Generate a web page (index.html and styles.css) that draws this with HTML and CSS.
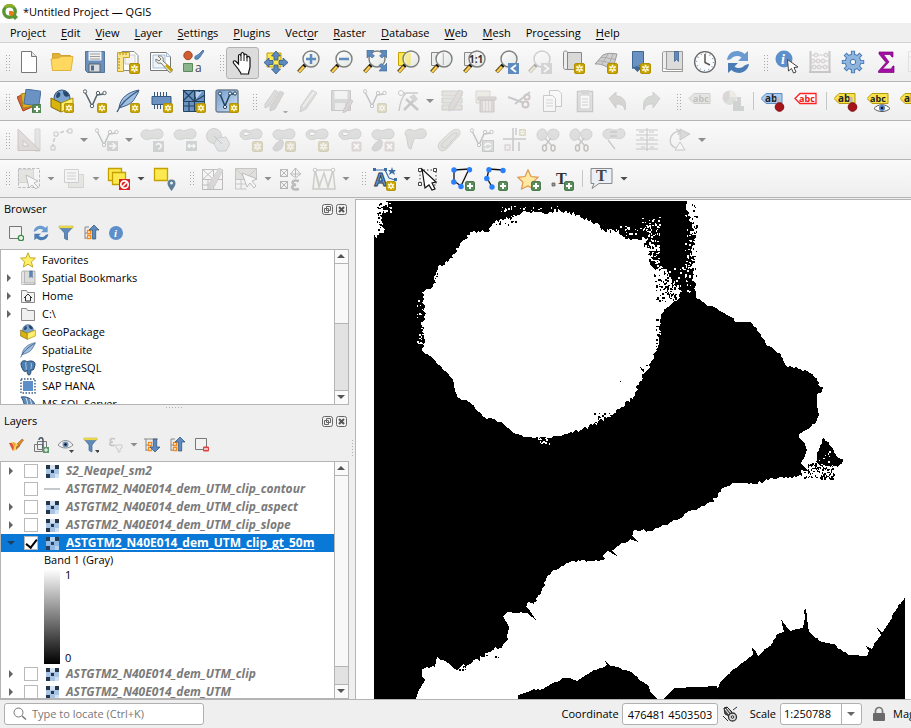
FILE: index.html
```html
<!DOCTYPE html>
<html lang="en">
<head>
<meta charset="utf-8">
<title>*Untitled Project — QGIS</title>
<link rel="stylesheet" href="styles.css">
</head>
<body>
<svg class="paints" aria-hidden="true">
  <defs>
    <linearGradient id="g-blue" x1="0" y1="0" x2="1" y2="1"><stop offset="0" stop-color="#6e9bd0"/><stop offset="1" stop-color="#d5e4f3"/></linearGradient>
    <linearGradient id="g-lens" x1="0" y1="0" x2="1" y2="1"><stop offset="0" stop-color="#fff"/><stop offset="1" stop-color="#dfe4e0"/></linearGradient>
  </defs>
</svg>
<svg class="sprite" aria-hidden="true">
  <symbol id="b-new" viewBox="0 0 11 11"><rect x=".5" y=".5" width="10" height="10" rx="1.5" fill="#c9a400" stroke="#b08f00"/><path d="M5.5 1.8v7.4M2.3 3.6l6.4 3.8M8.700 3.600l-6.400 3.800" stroke="#fffbe0" stroke-width="1.700"/><circle cx="5.500" cy="5.500" r="1" fill="#c9a400"/></symbol>
  <symbol id="b-add" viewBox="0 0 11 11"><rect x=".5" y=".5" width="9" height="9" rx="1.500" fill="#5a8c5a" stroke="#4d7a4d"/><path d="M5 2v6M2 5h6" stroke="#fff" stroke-width="2"/></symbol>
  <symbol id="b-x" viewBox="0 0 11 11"><rect x=".5" y=".5" width="10" height="10" rx="1.500" fill="#c99"/><path d="M3 3l5 5M8 3l-5 5" stroke="#fff" stroke-width="2"/></symbol>
  <symbol id="lens" viewBox="0 0 24 24"><path d="M8 15l-6.500 7" stroke="#5e4a1c" stroke-width="4"/><path d="M7 16.500l-5 5.500" stroke="#ffd04d" stroke-width="2.200"/><path d="M9 14l-2 2.500" stroke="#111" stroke-width="3.500"/><circle cx="14" cy="9" r="8" fill="url(#g-lens)" fill-opacity=".85" stroke="#7d807c" stroke-width="1.400"/></symbol>
  <symbol id="blob" viewBox="0 0 24 24"><path d="M2 9c-3-4 1-8 6-7 4 2 6-1 10-1 5 0 6 5 4 8-3 4-9 0-12 2-3 1-6 1-8-2z" fill="#aab5ab" stroke="#828a82"/></symbol>
  <symbol id="node" viewBox="0 0 24 24"><path d="M2 3l7 14 5-11 7-1" fill="none" stroke="#56646e" stroke-width="1.500"/><g fill="#fff" stroke="#56646e"><circle cx="2" cy="2.500" r="1.700"/><circle cx="9" cy="17" r="1.700"/><circle cx="15" cy="4" r="1.700"/><circle cx="21.500" cy="4" r="1.700"/></g></symbol>

  <symbol id="logo" viewBox="0 0 16 16"><circle cx="7.500" cy="7.500" r="5.700" fill="#fff" stroke="#589632" stroke-width="3.400"/><path d="M3 3a6.400 6.400 0 0 1 9 0" fill="none" stroke="#93b023" stroke-width="2.500"/><path d="M7 7h3l6 6-3 3-6-6z" fill="#589632"/><path d="M7 7h3l2.500 2.500-3 3L7 10z" fill="#ee7913"/></symbol>
  <symbol id="new" viewBox="0 0 24 24"><path d="M4.500 1.500h10l5 5v16h-15z" fill="#fff" stroke="#777"/><path d="M14.500 1.500v5h5" fill="#e5e5e5" stroke="#777"/></symbol>
  <symbol id="open" viewBox="0 0 24 24"><path d="M2.500 20.500v-17h7l1.500 2h9.500v5" fill="#dfb13a" stroke="#d0a030"/><path d="M1 9l8-1 2-1.500h12l-2 14H2.500z" fill="#ffd95f" stroke="#e0b23c"/></symbol>
  <symbol id="save" viewBox="0 0 24 24"><path d="M2.500 1.500h19v21h-17l-2-2z" fill="#6a8fbd" stroke="#56759c"/><path d="M5.500 1.500h13v9h-13z" fill="#f2f2f2"/><path d="M7 4h10M7 6.500h10M7 9h10" stroke="#9a9a9a"/><path d="M6 14h11v8H6z" fill="#d9dde2" stroke="#566"/><path d="M8 15.500h3v5H8z" fill="#50688a"/></symbol>
  <symbol id="layout" viewBox="0 0 24 24"><path d="M6 1.500h12l4 4v15H6z" fill="#fff" stroke="#888"/><path d="M9 5h10v9H9z" fill="#f4f4f4" stroke="#ccc"/><path d="M1.500 2.500h12v5h-6v14h-6z" fill="#fae58a" stroke="#c8a21a"/><path d="M4 3v2M7 3v2M10 3v2M2 9h2M2 12h2M2 15h2M2 18h2" stroke="#a88610"/><use href="#b-new" x="13" y="13" width="11" height="11"/></symbol>
  <symbol id="layoutmgr" viewBox="0 0 24 24"><path d="M1.500 2.500h16l4 4v14h-20z" fill="#fff" stroke="#777"/><path d="M17.500 2.500v4h4M4 5h12v13H4z" fill="#eef3fa" stroke="#a9bcd6"/><path d="M9 6c4-1 6 2 5 5l9 8c1 2-1 4-3 3l-8-9c-3 1-6-1-5-4l3 2 2-2z" fill="#f1f1ee" stroke="#77776e"/><path d="M17 15l6 6" stroke="#c9a400" stroke-width="2.500"/></symbol>
  <symbol id="style" viewBox="0 0 24 24"><circle cx="6" cy="5.500" r="4.200" fill="#cc5f33" stroke="#a8431b"/><path d="M13 9c-1-4 2-3 4-5l4-4 1 1-4 6c-1 2-3 3-5 2z" fill="#5d8bc0" stroke="#446b99" stroke-width=".8"/><path d="M1.500 13.500h9v8h-9z" fill="#8cb48c" stroke="#5a8c5a"/><text x="13" y="22" font-size="12" fill="#444" font-family="Open Sans">a</text></symbol>
  <symbol id="hand" viewBox="0 0 24 24"><path d="M8 19L2.500 12c-1-2 1-3 2.500-1.500L7.500 13V5c0-2 2-2 2.500 0V3c.5-2 2.500-2 3 0v1.500c.5-2 3-1.500 3 .5v1c1-1 3-.5 3 1.500v8c0 3-1.500 4-1.500 7.500H10c0-1.500-1-2-2-3.500z" fill="#fff" stroke="#111" stroke-width="1.200"/><path d="M10 5v5M13 4.500v5.500M16 5.500v5" stroke="#111"/></symbol>
  <symbol id="pan" viewBox="0 0 24 24"><path d="M3 3h14v14H3z" fill="#fce94f" stroke="#c4a000"/><path d="M12 1l4.500 5H14v4h-4V6H7.500zM12 24l-4.500-5H10v-4h4v4h2.500zM0 12.500L5 8v2.500h4v4H5V17zM24 12.500L19 8v2.500h-4v4h4V17z" fill="#5d8bc0" stroke="#35597f" stroke-width=".8"/></symbol>
  <symbol id="zin" viewBox="0 0 24 24"><use href="#lens"/><path d="M14 4v10M9 9h10" stroke="#5d8bc0" stroke-width="2.500"/></symbol>
  <symbol id="zout" viewBox="0 0 24 24"><use href="#lens"/><path d="M9 9h10" stroke="#5d8bc0" stroke-width="2.500"/></symbol>
  <symbol id="zfull" viewBox="0 0 24 24"><use href="#lens"/><path d="M4 0h7L8.500 3l3 3L9 8 6.500 5.500 4 8zM24 0h-7l2.500 3-3 3L19 8l2.500-2.500L24 8zM24 21h-8l2.500-3-2.500-2.500 2-2 3 2.500 3-3z" fill="#5d8bc0" stroke="#3f6793" stroke-width=".6"/></symbol>
  <symbol id="zsel" viewBox="0 0 24 24"><path d="M2.500 2.500h11v13h-11z" fill="#fce94f" stroke="#c4a000"/><use href="#lens" x="1"/><path d="M11 3h4v12h-3c-4-3-4-9-1-12z" fill="#f3e56a" opacity=".6"/></symbol>
  <symbol id="zlay" viewBox="0 0 24 24"><path d="M2.500 2.500h11v13h-11z" fill="#eee" stroke="#888"/><use href="#lens" x="1"/><path d="M14.500 3v12" stroke="#bbb"/></symbol>
  <symbol id="znat" viewBox="0 0 24 24"><path d="M2.500 2.500h11v13h-11z" fill="#eee" stroke="#888"/><use href="#lens" x="1"/><text x="7" y="13" font-size="10" font-weight="700" fill="#333" font-family="Open Sans">1:1</text></symbol>
  <symbol id="zlast" viewBox="0 0 24 24"><use href="#lens"/><path d="M13 13h11v11H13z" fill="#5d8bc0"/><path d="M21 15l-4.500 3.500L21 22" fill="none" stroke="#fff" stroke-width="1.800"/></symbol>
  <symbol id="znext" viewBox="0 0 24 24"><use href="#lens"/><path d="M13 13h11v11H13z" fill="#999"/><path d="M16 15l4.500 3.500L16 22" fill="none" stroke="#fff" stroke-width="1.800"/></symbol>
  <symbol id="mapview" viewBox="0 0 24 24"><path d="M5.500 2.500h15v17h-15z" fill="#d9dad8" stroke="#888"/><path d="M2.500 2.500c0-2 4-2 4 0v17h-2c-2 0-2-2-2-3z" fill="#eee" stroke="#888"/><use href="#b-new" x="13" y="13" width="11" height="11"/></symbol>
  <symbol id="scene" viewBox="0 0 24 24"><path d="M1 14L9 5c4-2 8-2 14-1l-4 14c-5 1-10-5-18-4z" fill="#d0d1cf" stroke="#999"/><path d="M4 11c6-1 11 3 16 2M7 8c5-2 9 2 14 1M8 14l6-10M14 17l5-13" fill="none" stroke="#aaa"/><use href="#b-new" x="13" y="13" width="11" height="11"/></symbol>
  <symbol id="bmnew" viewBox="0 0 24 24"><path d="M5.500 1.500h11v19l-4-5-7 3z" fill="#6a93c4" stroke="#3f6793"/><path d="M5.500 17l5 5 6-6" fill="#3f6793"/><use href="#b-new" x="13" y="13" width="11" height="11"/></symbol>
  <symbol id="bm" viewBox="0 0 24 24"><path d="M5.500 1.500h17v20h-17z" fill="#dcdcdb" stroke="#999"/><path d="M2.500 3c0-2 4-2 4 0v16h-4z" fill="#eee" stroke="#999"/><path d="M2.500 18.500v3h20v-2h-16" fill="#fff" stroke="#999"/><path d="M14.500 1.500h4v10l-2-2-2 2z" fill="#5d8bc0" stroke="#35597f" stroke-width=".7"/></symbol>
  <symbol id="clock" viewBox="0 0 24 24"><circle cx="12" cy="12" r="10.400" fill="#fbfbfb" stroke="#666" stroke-width="1.300"/><circle cx="12" cy="12" r="8.500" fill="none" stroke="#7d9ec5" stroke-width="1.500" stroke-dasharray="1 3.450"/><path d="M12 4v8.500l5 2.500" fill="none" stroke="#555" stroke-width="1.500"/></symbol>
  <symbol id="refresh" viewBox="0 0 24 24"><path d="M1 10C2 3 8 0 14 1.500c2 .5 3.500 1.500 4.500 2.500L22 1v10H12l3.500-3.500C12 5 8 6 6 8c-1 1-3 2-5 2z" fill="#6a9bd0"/><path d="M23 14c-1 7-7 10-13 8.500-2-.5-3.500-1.500-4.500-2.500L2 23V13h10l-3.500 3.500C12 19 16 18 18 16c1-1 3-2 5-2z" fill="#4a7db5"/></symbol>
  <symbol id="ident" viewBox="0 0 24 24"><circle cx="9" cy="9" r="8.500" fill="#5d8fca"/><text x="6" y="14" font-size="14" font-weight="700" font-style="italic" font-family="Liberation Serif" fill="#fff">i</text><path d="M12.500 9.500l1 11.500 3-2.500 2 4.500 2.500-1-2-4.500 4-.5z" fill="#fff" stroke="#444"/></symbol>
  <symbol id="abacus" viewBox="0 0 24 24"><path d="M2.500 1v21M21.500 1v21M1 22h22" fill="none" stroke="#777" stroke-width="2"/><path d="M3 5h18M3 11h18M3 17h18" stroke="#888"/><g fill="#e4dada" stroke="#a77"><circle cx="8" cy="5" r="2"/><circle cx="18" cy="5" r="2"/><circle cx="5" cy="11" r="2"/><circle cx="10" cy="11" r="2"/><circle cx="15" cy="11" r="2"/><circle cx="6" cy="17" r="2"/><circle cx="11" cy="17" r="2"/><circle cx="17" cy="17" r="2"/></g></symbol>
  <symbol id="gear" viewBox="0 0 24 24"><g stroke="#4478b3" stroke-width="4.200"><path id="t1" d="M12 .8v22.400M.8 12h22.400M4.100 4.100l15.800 15.800M19.900 4.100L4.100 19.900"/></g><circle cx="12" cy="12" r="7.800" fill="#8fb4de" stroke="#4478b3"/><g stroke="#8fb4de" stroke-width="2.400"><path d="M12 1.600v20.800M1.600 12h20.800M4.700 4.700l14.600 14.600M19.300 4.700L4.700 19.300"/></g><circle cx="12" cy="12" r="2.700" fill="#f3f3f3" stroke="#4478b3"/></symbol>
  <symbol id="sum" viewBox="0 0 24 24"><path d="M5 2h14v5h-1l-2-2.500h-6.500L15 12l-6.500 7H17l2-3h1v6.500H4.500V21l7.500-8.500L5 4z" fill="#a50ca5" stroke="#7a007a" stroke-width=".7"/></symbol>
  <symbol id="table" viewBox="0 0 24 24"><path d="M1.500 1.500h21v20h-21zM1.500 7h21M8 2v20" fill="#f8f8f8" stroke="#b5bcc8"/></symbol>

  <symbol id="dsm" viewBox="0 0 24 24"><path d="M0 8l9-4 6 14-9 4z" fill="#d06a3a" stroke="#a8431b"/><path d="M4 5l11-2 2 14-11 2z" fill="#e0b020" stroke="#a88610"/><path d="M8 1h15v15H8z" fill="#6a93c4" stroke="#4a709c" transform="rotate(8 15 8)"/><use href="#b-add" x="15" y="15" width="11" height="11"/></symbol>
  <symbol id="gpkg" viewBox="0 0 24 24"><circle cx="12" cy="9" r="8" fill="#7da3cf" stroke="#345880"/><path d="M7 4c3-2 4 1 3 3s-4 3-4 0M13 2c4 0 6 3 6 5-3 2-6 0-6-5M12 10l4 2" fill="#27486c"/><path d="M1 9l10 5v9L1 18z" fill="#d9b40e" stroke="#806600"/><path d="M11 14l12-5v9l-12 5z" fill="#fdf06c" stroke="#a88c0e"/></symbol>
  <symbol id="gpkgn" viewBox="0 0 24 24"><use href="#gpkg"/><use href="#b-new" x="14" y="14" width="10" height="10"/></symbol>
  <symbol id="shp" viewBox="0 0 24 24"><use href="#node"/><use href="#b-new" x="14" y="14" width="10" height="10"/></symbol>
  <symbol id="feather" viewBox="0 0 24 24"><path d="M3 19C4 9 12 3 23 1c-1 4-3 6-4 8-2 4-6 7-13 9z" fill="#9fbfe2" stroke="#3c5d84"/><path d="M1 23C5 14 12 8 22 2" fill="none" stroke="#3c5d84" stroke-width="1.400"/></symbol>
  <symbol id="feathern" viewBox="0 0 24 24"><use href="#feather"/><use href="#b-new" x="14" y="14" width="10" height="10"/></symbol>
  <symbol id="mem" viewBox="0 0 24 24"><path d="M5.500 3v17M8.500 3v17M11.500 3v17M14.500 3v17M17.500 3v17" stroke="#345880"/><path d="M3 7.500h19v8H3z" fill="#6a93c4" stroke="#345880"/><use href="#b-new" x="14" y="14" width="10" height="10"/></symbol>
  <symbol id="mesh" viewBox="0 0 24 24"><path d="M1.500 1.500h21v21h-21z" fill="#6a93c4" stroke="#23425f"/><path d="M12.500 1v22M1 12.500h22M1 1l11 11M12 1L1 12M18 1l-6 11M1 17h11M7 12v11M23 6l-10 6" stroke="#23425f" stroke-width="1.200"/><path d="M14 3h6l-6 7z" fill="#bcd3ec"/><use href="#b-new" x="14" y="14" width="10" height="10"/></symbol>
  <symbol id="virt" viewBox="0 0 24 24"><rect x="1" y="1" width="22" height="22" rx="2" fill="url(#g-blue)" stroke="#6f7f90" stroke-width="1.400"/><path d="M5 5l5 12 5-12 5 0" fill="none" stroke="#23425f" stroke-width="1.500"/><g fill="#fff" stroke="#23425f"><circle cx="5" cy="4.500" r="1.600"/><circle cx="10" cy="18" r="1.600"/><circle cx="15" cy="4.500" r="1.600"/><circle cx="20" cy="4.500" r="1.600"/></g><use href="#b-new" x="14" y="14" width="10" height="10"/></symbol>

  <symbol id="pencils" viewBox="0 0 24 24"><path d="M1 15L11 1l3 2L5 17l-4 2z" fill="#b5aca0" stroke="#888"/><path d="M6 18L16 2l4 2-9 16-5 2z" fill="#a59a8c" stroke="#888"/><path d="M19 22h5l-2.500 3z" fill="#222"/></symbol>
  <symbol id="pencil" viewBox="0 0 24 24"><path d="M4 17L15 1l5 3L9 20l-6 3z" fill="#bab4a4" stroke="#888"/><path d="M6 18L17 3" stroke="#ece8dc" stroke-width="1.500"/></symbol>
  <symbol id="savee" viewBox="0 0 24 24"><path d="M1.500 1.500h19v20h-19z" fill="#96a3a8" stroke="#777"/><path d="M4.500 2h13v8h-13z" fill="#eee"/><path d="M5 14h10v7H5z" fill="#ddd"/><path d="M14 20l6-10 3 2-6 10-4 2z" fill="#b99" stroke="#977"/></symbol>
  <symbol id="cut2" viewBox="0 0 24 24"><path d="M3 22C4 13 6 8 10 4h12M4 4h5" fill="none" stroke="#777" stroke-width="1.300"/><circle cx="5" cy="4" r="2.500" fill="#fff" stroke="#777"/><path d="M8 21l10-10M10 10l12 11" stroke="#777" stroke-width="2.500"/><path d="M13 8l5-3 4 5-3 3z" fill="#999"/></symbol>
  <symbol id="attr" viewBox="0 0 24 24"><path d="M1 2h20v5H1zM1 9h20v5H1zM1 16h20v5H1z" fill="#c9c2a0" stroke="#888"/><path d="M8 17L18 1l4 2-9 17-5 2z" fill="#c7aaa0" stroke="#888"/></symbol>
  <symbol id="trash" viewBox="0 0 24 24"><path d="M2 2h14v12H2z" fill="#e6d8a8" stroke="#a99"/><path d="M4 8h18v3H4zM6 11h14v12H6z" fill="#c99a96" stroke="#977"/><path d="M10 12v10M13 12v10M16 12v10" stroke="#fff"/></symbol>
  <symbol id="cut" viewBox="0 0 24 24"><path d="M1 8l16 6M23 3L8 15" stroke="#777" stroke-width="2"/><circle cx="18.500" cy="15.500" r="3" fill="none" stroke="#a66" stroke-width="2"/><circle cx="20" cy="8" r="2.600" fill="none" stroke="#a66" stroke-width="2"/></symbol>
  <symbol id="copy" viewBox="0 0 24 24"><path d="M9.500 1.500h9l3 3v13h-12z" fill="#fff" stroke="#777"/><path d="M3.500 6.500h9l3 3v13h-12z" fill="#fff" stroke="#777"/><path d="M6 11h7M6 14h7M6 17h7" stroke="#999"/></symbol>
  <symbol id="paste" viewBox="0 0 24 24"><path d="M4.500 2.500h15v20h-15z" fill="#ccc" stroke="#777" stroke-width="1.500"/><path d="M7 6h10v14H7z" fill="#fff" stroke="#888"/><path d="M8 1h8v4H8z" fill="#999"/><path d="M9 10h6M9 13h6M9 16h6" stroke="#888"/></symbol>
  <symbol id="undo" viewBox="0 0 24 24"><path d="M3 9.500l7-6.500v4c7 0 11 5 9 14-1-5-4-6-9-6v4z" fill="#a59a92" stroke="#8a8078"/></symbol>
  <symbol id="redo" viewBox="0 0 24 24"><path d="M21 9.500l-7-6.500v4c-7 0-11 5-9 14 1-5 4-6 9-6v4z" fill="#96a59a" stroke="#7d8a80"/></symbol>
  <symbol id="lab" viewBox="0 0 24 24"><path d="M1 9.500L6 4.500h16v10H6z" fill="#c8c8b4" stroke="#888"/><text x="5" y="13" font-size="9" font-weight="700" font-family="Open Sans" fill="#555">abc</text></symbol>
  <symbol id="pie" viewBox="0 0 24 24"><circle cx="8.500" cy="8.500" r="7" fill="#b59a9a"/><path d="M8.500 8.500V1.500A7 7 0 0 1 15.500 8.500z" fill="#e0d9a8"/><path d="M8.500 8.500h7a7 7 0 0 1-11 6z" fill="#a8bca8"/><path d="M12 12h4v10h-4zM16 8h4v14h-4zM20 17h3v5h-3z" fill="#8c9a90"/></symbol>
  <symbol id="labmv" viewBox="0 0 24 24"><path d="M0 9.500L5 4.500h16v10H5z" fill="#a9cbf2" stroke="#5d8bc0"/><text x="4" y="13" font-size="10" font-weight="700" font-family="Open Sans" fill="#222">ab</text><path d="M17 8v8" stroke="#bbb" stroke-width="3"/><circle cx="18.500" cy="18" r="4.300" fill="#a8141c" stroke="#7d0c12"/></symbol>
  <symbol id="labred" viewBox="0 0 24 24"><path d="M1 9.500L6 4.500h16v10H6z" fill="#fff" stroke="#f22" stroke-width="1.300"/><text x="5" y="13" font-size="9" font-weight="700" font-family="Open Sans" fill="#e11">abc</text></symbol>
  <symbol id="laby" viewBox="0 0 24 24"><path d="M0 9.500L5 4.500h16v10H5z" fill="#f7e34a" stroke="#b59a10"/><text x="4" y="13" font-size="10" font-weight="700" font-family="Open Sans" fill="#222">ab</text><path d="M17 8v8" stroke="#bbb" stroke-width="3"/><circle cx="18.500" cy="18" r="4.300" fill="#a8141c" stroke="#7d0c12"/></symbol>
  <symbol id="labeye" viewBox="0 0 24 24"><path d="M0 9.500L5 4.500h16v10H5z" fill="#f7e34a" stroke="#b59a10"/><text x="3" y="13" font-size="9" font-weight="700" font-family="Open Sans" fill="#222">abc</text><path d="M7 19.500c4-5 12-5 16 0-4 4-12 4-16 0z" fill="#fff" stroke="#555"/><circle cx="15" cy="19" r="3" fill="#4b7fc0"/><circle cx="15" cy="19" r="1.200" fill="#112"/></symbol>

  <symbol id="tri" viewBox="0 0 24 24"><path d="M18 1h5v22h-5z" fill="#c9c4b4" stroke="#999"/><path fill-rule="evenodd" d="M1 1v21.500h22zM6 12.500v5.500h6z" fill="#c5aba4" stroke="#8c6f68"/></symbol>
  <symbol id="arc" viewBox="0 0 24 24"><path d="M3 20C3 10 6 3 20 3" fill="none" stroke="#777" stroke-width="1.500" stroke-dasharray="4 2"/><g fill="#eee" stroke="#777"><path d="M1 18h4v4H1zM4 4h4v4H4zM18 1h4v4h-4z"/></g></symbol>
  <symbol id="nodearr" viewBox="0 0 24 24"><use href="#node"/><path d="M12 13h11v10H12z" fill="#899"/><path d="M14 18h6M17.500 15l3 3-3 3" fill="none" stroke="#fff" stroke-width="1.700"/></symbol>
  <symbol id="blobrot" viewBox="0 0 24 24"><use href="#blob"/><path d="M13 13h11v11H13z" fill="#899"/><path d="M16 17c3-3 6 0 5 2s-3 2-3 2" fill="none" stroke="#fff" stroke-width="1.600"/></symbol>
  <symbol id="blobmv" viewBox="0 0 24 24"><use href="#blob"/><path d="M13 13h11v10H13z" fill="#899"/><path d="M15 18h7M17 16l-2 2 2 2M20 16l2 2-2 2" fill="none" stroke="#fff" stroke-width="1.300"/></symbol>
  <symbol id="poly" viewBox="0 0 24 24"><circle cx="8" cy="8" r="7.500" fill="#aab5ab" stroke="#828a82"/><path d="M11 10l9-1 4 7-4 7H12l-4-7z" fill="#c0c9d0" stroke="#828a92"/><path d="M8 8l8 8" stroke="#666"/></symbol>
  <symbol id="ring" viewBox="0 0 24 24"><use href="#blob"/><path d="M4 6c0-3 5-2 7-1 0 2-5 4-7 1z" fill="#fff" stroke="#777"/><use href="#b-new" x="13" y="13" width="11" height="11"/></symbol>
  <symbol id="part" viewBox="0 0 24 24"><use href="#blob"/><path d="M1 20c4-7 8-9 10-7 1 6-2 9-6 10-3 0-4-1-4-3z" fill="#9aa59a" stroke="#828a82"/><use href="#b-new" x="13" y="13" width="11" height="11"/></symbol>
  <symbol id="ringx" viewBox="0 0 24 24"><use href="#blob"/><path d="M4 6c0-3 5-2 7-1 0 2-5 4-7 1z" fill="#fff" stroke="#777"/><use href="#b-x" x="13" y="13" width="11" height="11"/></symbol>
  <symbol id="partx" viewBox="0 0 24 24"><use href="#blob"/><path d="M1 20c4-7 8-9 10-7 1 6-2 9-6 10-3 0-4-1-4-3z" fill="#9aa59a" stroke="#828a82"/><use href="#b-x" x="13" y="13" width="11" height="11"/></symbol>
  <symbol id="reshape" viewBox="0 0 24 24"><path d="M2 8c-3-5 2-8 6-6 4 2 6-2 11-1 4 1 4 6 2 8-3 3-8 0-11 2l-3 10c-4 1-3-9-5-13z" fill="#b0b5a6" stroke="#8a8a7a"/></symbol>
  <symbol id="offset" viewBox="0 0 24 24"><path d="M3 22c-5-5 1-9 5-13s10-10 14-7c4 5-4 9-7 13s-8 10-12 7z" fill="#c5c3ac" stroke="#8a8a7a"/><path d="M5 19c-3-3 3-6 5-8s8-8 10-6-4 6-6 9-6 8-9 5z" fill="#b5beb2" stroke="#8a8a7a"/></symbol>
  <symbol id="noderot" viewBox="0 0 24 24"><use href="#node"/><path d="M12.500 12.500h11v11h-11z" fill="#a5b0b0" stroke="#777"/><path d="M15 18c0-3 5-3 6-1M21 19c-1 3-5 3-6 1" fill="none" stroke="#fff" stroke-width="1.600"/></symbol>
  <symbol id="trim" viewBox="0 0 24 24"><path d="M0 11h23M10 0v23M13 0v7M16 14v9" stroke="#777" stroke-width="1.500"/><use href="#b-new" x="16" y="1" width="7" height="7"/><use href="#b-x" x="1" y="16" width="7" height="7"/></symbol>
  <symbol id="split" viewBox="0 0 24 24"><path d="M1 7c0-6 7-8 9-4 2 5 0 8-3 9s-6-1-6-5zM12 4c3-5 11-3 11 2 0 6-7 7-9 5s-3-5-2-7z" fill="#aab5ab" stroke="#828a82"/><path d="M9 10l7 8M15 10l-6 8" stroke="#777" stroke-width="1.500"/><ellipse cx="8.500" cy="20" rx="2" ry="3" fill="none" stroke="#855" stroke-width="1.500"/><ellipse cx="17" cy="20" rx="2" ry="3" fill="none" stroke="#855" stroke-width="1.500"/></symbol>
  <symbol id="merge" viewBox="0 0 24 24"><path d="M1 6c0-5 7-6 10-4h4c5-3 8 0 8 4s-6 6-9 4H9c-4 2-8 0-8-4z" fill="#aab5ab" stroke="#828a82"/><path d="M8 4h7M8 8h7M6 12l7 9" stroke="#777" stroke-width="1.300"/></symbol>
  <symbol id="rails" viewBox="0 0 24 24"><path d="M1 2h22M1 7h22M1 12h22M1 16h22M1 21h22M4 4h5M14 4h5M5 10h4M14 10h5M6 19h4M15 19h4M12 0v23" stroke="#777" stroke-width="1.200"/></symbol>
  <symbol id="rotsym" viewBox="0 0 24 24"><path d="M8 20C-1 17 1 5 11 3M8 1l4 2-2 4" fill="none" stroke="#777" stroke-width="1.300"/><path d="M12 1l10 5-10 6z" fill="#9aa59a" stroke="#777"/><path d="M12 14l5 8H7z" fill="#fff" stroke="#777"/></symbol>

  <symbol id="selbox" viewBox="0 0 24 24"><path d="M1.500 2.500h15v13h-15z" fill="#c5c3a8" stroke="#999"/><path d="M1.500 1.500h21v19h-21z" fill="none" stroke="#555" stroke-dasharray="3 1.500"/><path d="M9 8l3 13 3-3 4 4 2-2-4-4 4-2z" fill="#fff" stroke="#555"/></symbol>
  <symbol id="selform" viewBox="0 0 24 24"><path d="M6.500 7.500h15v13h-15z" fill="#cfccae" stroke="#999"/><path d="M2.500 2.500h14v13h-14z" fill="#f4f4f4" stroke="#888"/><path d="M5 6h9M5 9h9M5 12h9" stroke="#888"/></symbol>
  <symbol id="desel" viewBox="0 0 24 24"><path d="M1.500 1.500h13v12h-13z" fill="#fce94f" stroke="#c4a000" stroke-width="1.300"/><path d="M5.500 5.500h13v12h-13z" fill="#fce94f" stroke="#c4a000" stroke-width="1.300"/><path d="M12 12h11v11H12z" fill="#d22"/><circle cx="17.500" cy="17.500" r="3.700" fill="none" stroke="#fff" stroke-width="1.700"/><path d="M15 20l5-5" stroke="#fff" stroke-width="1.700"/></symbol>
  <symbol id="selpin" viewBox="0 0 24 24"><path d="M2.500 1.500h13v12h-13z" fill="#fce94f" stroke="#c4a000" stroke-width="1.300"/><path d="M19.500 24c-2-3-4-5-4-7.500a4 4 0 0 1 8 0c0 2.500-2 4.500-4 7.500z" fill="#5d7e96"/><circle cx="19.500" cy="16" r="1.500" fill="#e8eef2"/></symbol>
  <symbol id="meshed" viewBox="0 0 24 24"><path d="M1.500 2.500h20v20h-20zM1 12.500h21M12.500 3v20M1 2l12 11M13 2L1 13M7 13v10M1 18h12" fill="none" stroke="#555"/><path d="M8 17L18 1l4 2-9 17-5 2z" fill="#b5a39c" stroke="#888"/></symbol>
  <symbol id="meshsel" viewBox="0 0 24 24"><path d="M1.500 1.500h21v11h-21z" fill="#b9b69a" stroke="#666"/><path d="M1 1l11 11 11-11M1.500 12v10h11M7 12v10M1 17h11" fill="none" stroke="#777"/><path d="M8 6l5 14 3-4 4 5 2-2-4-5 5-2z" fill="#fff" stroke="#555"/></symbol>
  <symbol id="meshtr" viewBox="0 0 24 24"><path d="M1.500 2.500h7v7h-7zM1 2l8 8M9 2L1 10M1.500 14.500h7v7h-7zM1 14l8 8M9 14l-8 8M16.500 1l5 6-5 4-5-4zM12 7h10M16.500 1v9" fill="none" stroke="#444"/><path d="M20 14c-8-2-8 3-3 4-6 0-5 6 3 4" fill="none" stroke="#555" stroke-width="2.500"/></symbol>
  <symbol id="meshm" viewBox="0 0 24 24"><path d="M3 3l-2 19h22L21 3l-5 17L12 6 7 20z" fill="#f3f3ea" stroke="#8a8570" stroke-width="1.500"/><path d="M3 3h18M3 3l5 17M21 3l-5 17" fill="none" stroke="#8a8570" stroke-width="1.300"/><g fill="#fff" stroke="#666"><circle cx="3" cy="3" r="1.800"/><circle cx="21" cy="3" r="1.800"/></g></symbol>
  <symbol id="annot" viewBox="0 0 24 24"><path d="M2 3h10l4 8 6 2" fill="none" stroke="#3c6ea8" stroke-width="1.200"/><path d="M0 1h3v3H0zM11 1h3v3h-3zM21 11h3v3h-3z" fill="#3c6ea8"/><text x="1" y="19" font-size="18" font-weight="700" font-family="Liberation Sans" fill="#6f9bd0" stroke="#23425f">A</text><path d="M19 0l1 3h3l-2 2 1 3-3-2-3 2 1-3-2-2h3z" fill="#3c6ea8"/><use href="#b-new" x="13" y="14" width="10" height="10"/></symbol>
  <symbol id="annsel" viewBox="0 0 24 24"><path d="M2 3h16v15H2z" fill="none" stroke="#444" stroke-dasharray="1.500 2"/><path d="M.5 1.500h3v3h-3zM15.500 1.500h3v3h-3zM.5 15.500h3v3h-3z" fill="#fff" stroke="#444"/><path d="M4 2l3 19 4-3 3 5 3-1-3-6 4-1z" fill="#fff" stroke="#111" stroke-width="1.200"/></symbol>
  <symbol id="annpoly" viewBox="0 0 24 24"><path d="M3 3l15-1-8 17-7-5z" fill="none" stroke="#111" stroke-width="1.300"/><g fill="#2a7fff"><circle cx="3" cy="3" r="2.700"/><circle cx="18.500" cy="2.700" r="2.700"/><circle cx="2.800" cy="15" r="2.700"/><circle cx="10" cy="19.500" r="2.700"/></g><use href="#b-add" x="14" y="14" width="11" height="11"/></symbol>
  <symbol id="annline" viewBox="0 0 24 24"><path d="M19 3L5 2 3 11l5 9" fill="none" stroke="#111" stroke-width="1.300"/><g fill="#2a7fff"><circle cx="5" cy="2.700" r="2.700"/><circle cx="19" cy="3.500" r="2.700"/><circle cx="2.800" cy="11.500" r="2.700"/><circle cx="8" cy="20" r="2.700"/></g><use href="#b-add" x="14" y="14" width="11" height="11"/></symbol>
  <symbol id="annstar" viewBox="0 0 24 24"><path d="M11 3l3 6.500 7 .8-5 5 1.500 7L11 19l-6.500 3L6 15.300l-5-5 7-.8z" fill="#fde9a2" stroke="#e0964a" stroke-width="1.200"/><use href="#b-add" x="14" y="14" width="11" height="11"/></symbol>
  <symbol id="anntext" viewBox="0 0 24 24"><path d="M2 16h3v3H2z" fill="#999" stroke="#555" stroke-width=".7"/><text x="6" y="17" font-size="16" font-weight="700" font-family="Liberation Serif" fill="#333">T</text><use href="#b-add" x="14" y="14" width="11" height="11"/></symbol>
  <symbol id="balloon" viewBox="0 0 24 24"><path d="M1 1.500h21v15H9L2 21.500l2-5H1z" fill="#eaf0f5" stroke="#888"/><text x="6" y="14" font-size="16" font-weight="700" font-family="Liberation Serif" fill="#444">T</text></symbol>

  <symbol id="addlay" viewBox="0 0 16 16"><path d="M1.500 1.500h12v12h-12z" fill="#f2f2f2" stroke="#777"/><circle cx="13" cy="13" r="2.700" fill="#eaf3ea" stroke="#3c8c4a" stroke-width="1.300"/></symbol>
  <symbol id="funnel" viewBox="0 0 16 16"><path d="M1 2h14L9.500 8v7l-3-1.500V8z" fill="#5d8bc0" stroke="#44698f" stroke-width=".7"/><path d="M1 1h14v2H1z" fill="#fce94f" stroke="#b5a030" stroke-width=".5"/></symbol>
  <symbol id="treeup" viewBox="0 0 16 16"><path d="M2 2v12M2 2h4M2 8h3M2 13h3" stroke="#888"/><path d="M4.500 5.500h3v3h-3zM4.500 10.500h3v3h-3z" fill="#fff" stroke="#f28a1e" stroke-width="1.300"/><path d="M11 0l5 5h-3.300v9H9.300V5H6z" fill="#5d8bc0" stroke="#2d4d70" stroke-width=".7"/></symbol>
  <symbol id="treedn" viewBox="0 0 16 16"><path d="M2 2v12M0 2h14M2 8h3M2 13h3" stroke="#888"/><path d="M4.500 5.500h3v3h-3zM4.500 10.500h3v3h-3z" fill="#fff" stroke="#f28a1e" stroke-width="1.300"/><path d="M11 15l5-5h-3.300V2H9.300v8H6z" fill="#5d8bc0" stroke="#2d4d70" stroke-width=".7"/></symbol>
  <symbol id="info" viewBox="0 0 16 16"><circle cx="8" cy="8" r="7" fill="#5d8fca"/><text x="6" y="12" font-size="11" font-weight="700" font-style="italic" font-family="Liberation Serif" fill="#fff">i</text></symbol>
  <symbol id="brush" viewBox="0 0 16 16"><path d="M8 8l6-6 1.500 1-5 7z" fill="#d98b2b" stroke="#a55f10" stroke-width=".6"/><path d="M1 6l4-1 3 1 3 3-3 4-3 1z" fill="#f7d24a"/><path d="M1 6l3 0 2 4-1 4z" fill="#e0524a"/><path d="M5 5l3 2-2 3z" fill="#f0a038"/><path d="M8 13l4-4-1-2-3 3z" fill="#b5722b"/></symbol>
  <symbol id="addgrp" viewBox="0 0 16 16"><path d="M1.500 7.500h8v7h-8z" fill="#eee" stroke="#777"/><path d="M4.500 4.500h9v8h-9z" fill="none" stroke="#777"/><path d="M6 3c0-3 4-3 4 0v8" fill="none" stroke="#456" stroke-width="1.400"/><path d="M10 10h6v6h-6z" fill="#5a9a6a"/><path d="M13 11v4M11 13h4" stroke="#fff"/></symbol>
  <symbol id="eye" viewBox="0 0 16 16"><path d="M0 8c4-6 11-6 15 0-4 4-11 4-15 0z" fill="#f4f4f4" stroke="#888"/><circle cx="7.500" cy="7.500" r="3" fill="#6a93c4"/><circle cx="7.500" cy="7.500" r="1.300" fill="#111"/><path d="M11 13h5l-2.500 3z" fill="#444"/></symbol>
  <symbol id="funneld" viewBox="0 0 16 16"><path d="M1 2h13L9 8v7l-3-1.500V8z" fill="#5d8bc0" stroke="#44698f" stroke-width=".7"/><path d="M1 1h13v2H1z" fill="#fce94f" stroke="#b5a030" stroke-width=".5"/><path d="M12 13h5l-2.500 3z" fill="#444"/></symbol>
  <symbol id="eps" viewBox="0 0 16 16"><path d="M7 2C1 0 1 5 5 5c-5 0-4 5 2 3" fill="none" stroke="#777" stroke-width="1.700"/><path d="M8 8h6v3l-2 1v3h-2v-3l-2-1z" fill="none" stroke="#888"/></symbol>
  <symbol id="rmlay" viewBox="0 0 16 16"><path d="M1.500 1.500h11v11h-11z" fill="#f2f2f2" stroke="#777"/><rect x="9" y="9.500" width="6" height="5" rx="1" fill="#e04040"/><path d="M10 12h4" stroke="#fff" stroke-width="1.300"/></symbol>
  <symbol id="star" viewBox="0 0 16 16"><path d="M8 .8l2 5 5.400.3-4 3.700 1.300 5.300L8 12.200 3.300 15.100l1.300-5.300-4-3.700L6 5.800z" fill="#fcf06a" stroke="#c9a820"/></symbol>
  <symbol id="home" viewBox="0 0 16 16"><path d="M1.500 2.500h5l1 2h7v10h-13z" fill="#f3f3f3" stroke="#888"/><path d="M4 10l4-4 4 4M5.500 9v4h5V9" fill="none" stroke="#333"/></symbol>
  <symbol id="folder" viewBox="0 0 16 16"><path d="M1.500 2.500h5l1 2h7v10h-13z" fill="#f0f0f0" stroke="#888"/></symbol>
  <symbol id="pg" viewBox="0 0 16 16"><path d="M1 4c0-4 5-4 6-2 3-2 8-1 8 2 0 2-1 5-2 6l-2 0c0 3-.5 5-2 5s-2-2-2-5c-1 2-3 2-4 0C2 8 1 6 1 4z" fill="#4a7db0" stroke="#27486c"/><path d="M6 2c-1 3 1 5 0 8M11 3c1 3 0 4 0 6" fill="none" stroke="#c5d8ea" stroke-width=".8"/></symbol>
  <symbol id="hana" viewBox="0 0 16 16"><path d="M3 3h10v10H3z" fill="#5d8fca"/><path d="M1 1h14v14H1z" fill="none" stroke="#345880" stroke-width="1.400" stroke-dasharray="1.500 1.500"/></symbol>
  <symbol id="mssql" viewBox="0 0 16 16"><path d="M1 1c4-1 12 1 14 8v7H4C5 10 4 5 1 1z" fill="#5d8bb5" stroke="#345880"/><path d="M6 2c2 4 2 9 1 14M10 3c2 4 2 9 1 13" fill="none" stroke="#dce8f2"/></symbol>
  <symbol id="raster" viewBox="0 0 13 13" shape-rendering="crispEdges"><path d="M0 0h13v13H0z" fill="#a8c4e4"/><path d="M0 0h4v4H0zM9 0h4v4H9zM5 5h3v3H5zM0 9h4v4H0z" fill="#26364a"/><path d="M4 0h5v4H4zM9 9h4v4H9z" fill="#d3e1f0"/></symbol>
  <symbol id="float" viewBox="0 0 11 11"><rect x=".5" y=".5" width="10" height="10" rx="2" fill="#f2f2f2" stroke="#666"/><path d="M4.500 2.500h4v4h-4zM2.500 4.500h4v4h-4z" fill="none" stroke="#666"/></symbol>
  <symbol id="close" viewBox="0 0 11 11"><rect x=".5" y=".5" width="10" height="10" rx="2" fill="#f2f2f2" stroke="#666"/><path d="M3 3l5 5M8 3l-5 5" stroke="#555" stroke-width="2"/></symbol>
  <symbol id="mag" viewBox="0 0 14 14"><circle cx="5.500" cy="5.500" r="4.500" fill="none" stroke="#777"/><path d="M9 9l4 3.500" stroke="#777" stroke-width="1.500"/></symbol>
  <symbol id="track" viewBox="0 0 16 16"><path d="M2 2l3-1 5 5-3 4-4-2z" fill="#555" stroke="#222"/><path d="M3 3l4 5M5 2l4 5" stroke="#fff"/><circle cx="10.500" cy="11" r="4" fill="#ddd" stroke="#333" stroke-width="1.300"/><circle cx="10.500" cy="11" r="1.300" fill="none" stroke="#333"/><path d="M11 4l4-3M1 10l5 5" stroke="#333"/></symbol>
  <symbol id="lock" viewBox="0 0 14 16"><path d="M3.500 8V5a3.500 3.500 0 0 1 7 0v3" fill="none" stroke="#777" stroke-width="1.700"/><rect x="1" y="7" width="12" height="8" rx="1" fill="#6a6a6a"/></symbol>
</svg>

<div class="window">
  <header class="titlebar"><svg class="logo"><use href="#logo"/></svg><span>*Untitled Project — QGIS</span></header>
  <nav class="menubar">
    <a href="#">Pro<u>j</u>ect</a><a href="#"><u>E</u>dit</a><a href="#"><u>V</u>iew</a><a href="#"><u>L</u>ayer</a><a href="#"><u>S</u>ettings</a><a href="#"><u>P</u>lugins</a><a href="#">Vect<u>o</u>r</a><a href="#"><u>R</u>aster</a><a href="#"><u>D</u>atabase</a><a href="#"><u>W</u>eb</a><a href="#"><u>M</u>esh</a><a href="#">Pro<u>c</u>essing</a><a href="#"><u>H</u>elp</a>
  </nav>

  <div class="toolbar" role="toolbar" aria-label="Project and map navigation">
    <i class="grip first"></i>
    <button aria-label="New"><svg><use href="#new"/></svg></button>
    <button aria-label="Open"><svg><use href="#open"/></svg></button>
    <button aria-label="Save"><svg><use href="#save"/></svg></button>
    <button aria-label="New layout"><svg><use href="#layout"/></svg></button>
    <button aria-label="Layout manager"><svg><use href="#layoutmgr"/></svg></button>
    <button aria-label="Style manager"><svg><use href="#style"/></svg></button>
    <i class="grip"></i>
    <button class="on" aria-label="Pan"><svg><use href="#hand"/></svg></button>
    <button aria-label="Pan to selection"><svg><use href="#pan"/></svg></button>
    <button aria-label="Zoom in"><svg><use href="#zin"/></svg></button>
    <button aria-label="Zoom out"><svg><use href="#zout"/></svg></button>
    <button aria-label="Zoom full"><svg><use href="#zfull"/></svg></button>
    <button aria-label="Zoom to selection"><svg><use href="#zsel"/></svg></button>
    <button aria-label="Zoom to layer"><svg><use href="#zlay"/></svg></button>
    <button aria-label="Native resolution"><svg><use href="#znat"/></svg></button>
    <button aria-label="Zoom last"><svg><use href="#zlast"/></svg></button>
    <button disabled aria-label="Zoom next"><svg><use href="#znext"/></svg></button>
    <button aria-label="New map view"><svg><use href="#mapview"/></svg></button>
    <button aria-label="New 3D view"><svg><use href="#scene"/></svg></button>
    <button aria-label="New bookmark"><svg><use href="#bmnew"/></svg></button>
    <button aria-label="Bookmarks"><svg><use href="#bm"/></svg></button>
    <button aria-label="Temporal controller"><svg><use href="#clock"/></svg></button>
    <button aria-label="Refresh"><svg><use href="#refresh"/></svg></button>
    <i class="grip"></i>
    <button aria-label="Identify"><svg><use href="#ident"/></svg></button>
    <button disabled aria-label="Field calculator"><svg><use href="#abacus"/></svg></button>
    <button aria-label="Toolbox"><svg><use href="#gear"/></svg></button>
    <button aria-label="Statistics"><svg><use href="#sum"/></svg></button>
    <button disabled aria-label="Attribute table"><svg><use href="#table"/></svg></button>
  </div>

  <div class="toolbar" role="toolbar" aria-label="Data source and digitizing">
    <i class="grip first"></i>
    <button aria-label="Data source manager"><svg><use href="#dsm"/></svg></button>
    <button aria-label="New GeoPackage"><svg><use href="#gpkgn"/></svg></button>
    <button aria-label="New shapefile"><svg><use href="#shp"/></svg></button>
    <button aria-label="New SpatiaLite"><svg><use href="#feathern"/></svg></button>
    <button aria-label="New scratch layer"><svg><use href="#mem"/></svg></button>
    <button aria-label="New mesh"><svg><use href="#mesh"/></svg></button>
    <button aria-label="New virtual layer"><svg><use href="#virt"/></svg></button>
    <i class="grip"></i>
    <button disabled aria-label="Current edits"><svg><use href="#pencils"/></svg></button>
    <button disabled aria-label="Toggle editing"><svg><use href="#pencil"/></svg></button>
    <button disabled aria-label="Save edits"><svg><use href="#savee"/></svg></button>
    <button disabled aria-label="Add feature"><svg><use href="#shp"/></svg></button>
    <button disabled aria-label="Vertex tool"><svg><use href="#cut2"/></svg></button><i class="drop"></i>
    <button disabled aria-label="Modify attributes"><svg><use href="#attr"/></svg></button>
    <button disabled aria-label="Delete selected"><svg><use href="#trash"/></svg></button>
    <button disabled aria-label="Cut"><svg><use href="#cut"/></svg></button>
    <button disabled aria-label="Copy"><svg><use href="#copy"/></svg></button>
    <button disabled aria-label="Paste"><svg><use href="#paste"/></svg></button>
    <button disabled aria-label="Undo"><svg><use href="#undo"/></svg></button>
    <button disabled aria-label="Redo"><svg><use href="#redo"/></svg></button>
    <i class="grip"></i>
    <button disabled aria-label="Labels"><svg><use href="#lab"/></svg></button>
    <button disabled aria-label="Diagrams"><svg><use href="#pie"/></svg></button>
    <i class="sep"></i>
    <button aria-label="Pinned labels"><svg><use href="#labmv"/></svg></button>
    <button aria-label="Unplaced labels"><svg><use href="#labred"/></svg></button>
    <i class="sep"></i>
    <button aria-label="Pin labels"><svg><use href="#laby"/></svg></button>
    <button aria-label="Show labels"><svg><use href="#labeye"/></svg></button>
    <button aria-label="Move label"><svg><use href="#laby"/></svg></button>
  </div>

  <div class="toolbar" role="toolbar" aria-label="Advanced digitizing">
    <i class="grip first"></i>
    <button disabled aria-label="Advanced digitizing"><svg><use href="#tri"/></svg></button>
    <button disabled aria-label="Circular string"><svg><use href="#arc"/></svg></button><i class="drop"></i>
    <button disabled aria-label="Move feature"><svg><use href="#nodearr"/></svg></button><i class="drop"></i>
    <button disabled aria-label="Rotate feature"><svg><use href="#blobrot"/></svg></button>
    <button disabled aria-label="Scale feature"><svg><use href="#blobmv"/></svg></button>
    <button disabled aria-label="Simplify"><svg><use href="#poly"/></svg></button>
    <button disabled aria-label="Add ring"><svg><use href="#ring"/></svg></button>
    <button disabled aria-label="Add part"><svg><use href="#part"/></svg></button>
    <button disabled aria-label="Fill ring"><svg><use href="#ring"/></svg></button>
    <button disabled aria-label="Delete ring"><svg><use href="#ringx"/></svg></button>
    <button disabled aria-label="Delete part"><svg><use href="#partx"/></svg></button>
    <button disabled aria-label="Reshape"><svg><use href="#reshape"/></svg></button>
    <button disabled aria-label="Offset curve"><svg><use href="#offset"/></svg></button>
    <button disabled aria-label="Reverse line"><svg><use href="#noderot"/></svg></button>
    <button disabled aria-label="Trim"><svg><use href="#trim"/></svg></button>
    <button disabled aria-label="Split features"><svg><use href="#split"/></svg></button>
    <button disabled aria-label="Split parts"><svg><use href="#split"/></svg></button>
    <button disabled aria-label="Merge"><svg><use href="#merge"/></svg></button>
    <button disabled aria-label="Merge attributes"><svg><use href="#rails"/></svg></button>
    <button disabled aria-label="Rotate symbols"><svg><use href="#rotsym"/></svg></button><i class="drop"></i>
  </div>

  <div class="toolbar last" role="toolbar" aria-label="Selection and annotations">
    <i class="grip first"></i>
    <button disabled aria-label="Select features"><svg><use href="#selbox"/></svg></button><i class="drop"></i>
    <button disabled aria-label="Select by value"><svg><use href="#selform"/></svg></button><i class="drop"></i>
    <button aria-label="Deselect"><svg><use href="#desel"/></svg></button><i class="drop dark"></i>
    <button aria-label="Select by location"><svg><use href="#selpin"/></svg></button>
    <i class="grip"></i>
    <button disabled aria-label="Edit mesh"><svg><use href="#meshed"/></svg></button>
    <button disabled aria-label="Select mesh"><svg><use href="#meshsel"/></svg></button><i class="drop"></i>
    <button disabled aria-label="Transform mesh"><svg><use href="#meshtr"/></svg></button>
    <button disabled aria-label="Force mesh lines"><svg><use href="#meshm"/></svg></button><i class="drop"></i>
    <i class="grip"></i>
    <button aria-label="Annotation layer"><svg><use href="#annot"/></svg></button><i class="drop dark"></i>
    <button aria-label="Modify annotations"><svg><use href="#annsel"/></svg></button>
    <button aria-label="Polygon annotation"><svg><use href="#annpoly"/></svg></button>
    <button aria-label="Line annotation"><svg><use href="#annline"/></svg></button>
    <button aria-label="Marker annotation"><svg><use href="#annstar"/></svg></button>
    <button aria-label="Text annotation"><svg><use href="#anntext"/></svg></button>
    <i class="sep"></i>
    <button aria-label="Form annotation"><svg><use href="#balloon"/></svg></button><i class="drop dark"></i>
  </div>

  <main class="work">
    <aside class="docks">
      <section class="dock browser">
        <div class="dock-title"><span>Browser</span><button aria-label="Float"><svg><use href="#float"/></svg></button><button aria-label="Close"><svg><use href="#close"/></svg></button></div>
        <div class="dock-tools">
          <button aria-label="Add layer"><svg><use href="#addlay"/></svg></button>
          <button aria-label="Refresh"><svg><use href="#refresh"/></svg></button>
          <button aria-label="Filter"><svg><use href="#funnel"/></svg></button>
          <button aria-label="Collapse all"><svg><use href="#treeup"/></svg></button>
          <button aria-label="Properties"><svg><use href="#info"/></svg></button>
        </div>
        <div class="view">
          <ul class="tree">
            <li><i class="exp none"></i><svg><use href="#star"/></svg>Favorites</li>
            <li><i class="exp"></i><svg><use href="#bm"/></svg>Spatial Bookmarks</li>
            <li><i class="exp"></i><svg><use href="#home"/></svg>Home</li>
            <li><i class="exp"></i><svg><use href="#folder"/></svg>C:\</li>
            <li><i class="exp none"></i><svg><use href="#gpkg"/></svg>GeoPackage</li>
            <li><i class="exp none"></i><svg><use href="#feather"/></svg>SpatiaLite</li>
            <li><i class="exp none"></i><svg><use href="#pg"/></svg>PostgreSQL</li>
            <li><i class="exp none"></i><svg><use href="#hana"/></svg>SAP HANA</li>
            <li><i class="exp none"></i><svg><use href="#mssql"/></svg>MS SQL Server</li>
          </ul>
          <div class="scroll"><i class="up"></i><i class="thumb"></i><i class="trough"></i><i class="down"></i></div>
        </div>
      </section>
      <div class="splitter"><i></i></div>
      <section class="dock layers">
        <div class="dock-title"><span>Layers</span><button aria-label="Float"><svg><use href="#float"/></svg></button><button aria-label="Close"><svg><use href="#close"/></svg></button></div>
        <div class="dock-tools">
          <button aria-label="Layer styling"><svg><use href="#brush"/></svg></button>
          <button aria-label="Add group"><svg><use href="#addgrp"/></svg></button>
          <button aria-label="Map themes"><svg><use href="#eye"/></svg></button>
          <button aria-label="Filter legend"><svg><use href="#funneld"/></svg></button>
          <button disabled aria-label="Filter by expression"><svg><use href="#eps"/></svg></button><i class="drop"></i>
          <button aria-label="Expand all"><svg><use href="#treedn"/></svg></button>
          <button aria-label="Collapse all"><svg><use href="#treeup"/></svg></button>
          <button aria-label="Remove layer"><svg><use href="#rmlay"/></svg></button>
        </div>
        <div class="view">
          <ul class="tree names">
            <li><i class="exp"></i><label><input type="checkbox"><svg><use href="#raster"/></svg>S2_Neapel_sm2</label></li>
            <li><i class="exp none"></i><label><input type="checkbox"><b class="line"></b>ASTGTM2_N40E014_dem_UTM_clip_contour</label></li>
            <li><i class="exp"></i><label><input type="checkbox"><svg><use href="#raster"/></svg>ASTGTM2_N40E014_dem_UTM_clip_aspect</label></li>
            <li><i class="exp"></i><label><input type="checkbox"><svg><use href="#raster"/></svg>ASTGTM2_N40E014_dem_UTM_clip_slope</label></li>
            <li class="sel"><i class="exp open"></i><label><input type="checkbox" checked><svg><use href="#raster"/></svg><span>ASTGTM2_N40E014_dem_UTM_clip_gt_50m</span></label></li>
            <li class="legend"><div class="band">Band 1 (Gray)</div><div class="ramp"><i></i><div><span>1</span><span>0</span></div></div></li>
            <li><i class="exp"></i><label><input type="checkbox"><svg><use href="#raster"/></svg>ASTGTM2_N40E014_dem_UTM_clip</label></li>
            <li><i class="exp"></i><label><input type="checkbox"><svg><use href="#raster"/></svg>ASTGTM2_N40E014_dem_UTM</label></li>
          </ul>
          <div class="scroll"><i class="up"></i><i class="thumb"></i><i class="trough"></i><i class="down"></i></div>
        </div>
      </section>
    </aside>
    <div class="vsplit"><i></i></div>
    <section class="map"><svg id="map" viewBox="356 200 555 499" preserveAspectRatio="xMinYMin slice" shape-rendering="crispEdges"></svg></section>
  </main>

  <footer class="status">
    <label class="locator"><svg><use href="#mag"/></svg><input type="text" placeholder="Type to locate (Ctrl+K)" aria-label="Locator"></label>
    <label for="coord">Coordinate</label><input id="coord" type="text" value="476481 4503503">
    <button aria-label="Toggle extents"><svg><use href="#track"/></svg></button>
    <label for="scale">Scale</label><div class="combo"><select id="scale"><option>1:250788</option></select></div>
    <svg class="lock"><use href="#lock"/></svg><span class="magn">Magnifier</span>
  </footer>
</div>
<script src="map.js"></script>
</body>
</html>
```
FILE: styles.css
```css
* { box-sizing: border-box; }
body { margin: 0; font: 11px/18px "Open Sans", "Noto Sans", sans-serif; color: #000; background: #efefef; }
button { padding: 0; border: 0; background: none; font: inherit; }
svg { display: block; flex: none; overflow: visible; }
.paints { position: absolute; width: 0; height: 0; }
.sprite { display: none; }
.window { display: flex; flex-direction: column; height: 100vh; overflow: hidden; }
.titlebar { display: flex; align-items: center; gap: 5px; height: 23px; padding-left: 2px; background: #fff; flex: none; }
.logo { width: 16px; height: 16px; }
.menubar { display: flex; gap: 15px; height: 20px; padding-left: 10px; line-height: 20px; border-bottom: 1px solid #d2d2d2; flex: none; }
.menubar a { color: #000; text-decoration: none; }
.menubar u { text-underline-offset: 2px; }

.toolbar { display: flex; height: 39px; flex: none; overflow: hidden; border-bottom: 1px solid #b4b4b4; background: linear-gradient(#fafafa, #eeeeee); }
.toolbar.last { height: 38px; }
.toolbar button { width: 33px; height: 38px; padding: 0 4px 0 5px; flex: none; }
.toolbar svg { width: 24px; height: 24px; }
.toolbar .on { height: 32px; margin-top: 4px; padding: 0 4px; background: #dcdcdc; border: 1px solid #b2b2b2; border-radius: 3px; }
button:disabled svg { opacity: .34; filter: grayscale(.6); }
.grip { width: 16px; flex: none; padding: 11px 2px 10px 9px; background: radial-gradient(circle, #a8a8a8 30%, transparent 45%) 0 0 / 3px 3px content-box; }
.grip.first { width: 12px; padding-left: 5px; }
.drop { width: 12px; flex: none; align-self: center; height: 4px; background: #8d8d8d; clip-path: polygon(2px 0, 10px 0, 6px 4px); }
.drop.dark { background: #4a4a4a; }
.sep { width: 7px; flex: none; margin: 10px 0; background: linear-gradient(#c6c6c6, #c6c6c6) 4px 0 / 1px 100% no-repeat; }

.work { display: flex; flex: 1; min-height: 0; }
.docks { display: flex; flex-direction: column; width: 349px; flex: none; }
.dock { display: flex; flex-direction: column; min-height: 0; }
.browser { height: 207px; flex: none; }
.layers { flex: 1; }
.dock-title { display: flex; align-items: center; gap: 3px; height: 22px; padding: 0 2px 0 4px; flex: none; }
.dock-title span { flex: 1; }
.dock-title svg { width: 11px; height: 11px; }
.dock-tools { display: flex; align-items: center; gap: 9px; height: 29px; padding: 0 0 4px 8px; flex: none; }
.dock-tools svg { width: 16px; height: 16px; }
.dock-tools .drop { margin: 0 -5px 0 -5px; }
.view { display: flex; flex: 1; min-height: 0; border: 1px solid #b4b4b4; background: #fff; }
.tree { flex: 1; min-width: 0; margin: 0; padding: 1px 0 0; list-style: none; overflow: hidden; }
.tree li { display: flex; align-items: center; height: 18px; white-space: nowrap; }
.tree svg { width: 16px; height: 16px; margin-right: 6px; }
.exp { width: 5px; height: 8px; margin: 0 8px 0 6px; flex: none; background: #646464; clip-path: polygon(0 0, 4px 4px, 0 8px); }
.exp.none { visibility: hidden; }
.names { padding: 0; }
.names .exp { margin-left: 8px; margin-right: 10px; }
.names .exp.open { width: 8px; margin: 0 9px 0 6px; background: #1b3f63; clip-path: polygon(0 2px, 8px 2px, 4px 6px); }
.names label { display: flex; align-items: center; font-size: 12px; font-weight: 700; font-style: italic; color: #7a7a7a; }
.names input { appearance: none; width: 14px; height: 14px; margin: 0 8px 0 0; border: 1px solid #b9b9b9; background: #fff; }
.names input:checked::after { content: ""; display: block; width: 5px; height: 9px; margin: 0 0 0 3px; border: solid #000; border-width: 0 2px 2px 0; transform: rotate(38deg); }
.names svg { width: 13px; height: 13px; margin-right: 7px; }
.line { width: 16px; height: 2px; margin: 0 6px 0 -2px; background: #c5c9cc; }
.names .sel { background: #0a78d7; }
.sel label { color: #fff; font-style: normal; }
.sel label span { text-decoration: underline; text-underline-offset: 2px; }
.sel svg { opacity: .85; }
.tree .legend { display: block; height: 113px; padding-left: 43px; }
.band { height: 17px; line-height: 16px; }
.ramp { display: flex; height: 95px; gap: 5px; }
.ramp i { width: 16px; background: linear-gradient(#fff, #000); }
.ramp div { display: flex; flex-direction: column; justify-content: space-between; line-height: 12px; }
.scroll { display: flex; flex-direction: column; width: 14px; flex: none; border-left: 1px solid #b4b4b4; background: #e2e2e2; }
.scroll .up, .scroll .down { height: 14px; flex: none; background: #fafafa; border-bottom: 1px solid #b4b4b4; }
.scroll .down { border-bottom: 0; border-top: 1px solid #b4b4b4; }
.up::after, .down::after { content: ""; display: block; width: 8px; height: 4px; margin: 4px 0 0 2px; background: #555; clip-path: polygon(0 4px, 4px 0, 8px 4px); }
.down::after { clip-path: polygon(0 0, 8px 0, 4px 4px); }
.thumb { height: 60px; flex: none; background: #f8f8f8; border-bottom: 1px solid #b4b4b4; }
.layers .thumb { height: auto; flex: 1; }
.trough { flex: 1; }
.layers .trough { flex: none; height: 17px; }
.splitter { height: 5px; flex: none; display: flex; justify-content: center; align-items: center; }
.splitter i { width: 17px; height: 1px; background: repeating-linear-gradient(90deg, #b0b0b0 0 1px, transparent 1px 3px); }
.vsplit { width: 6px; flex: none; display: flex; align-items: center; justify-content: center; }
.vsplit i { width: 1px; height: 17px; background: repeating-linear-gradient(#b0b0b0 0 1px, transparent 1px 3px); }
.map { flex: 1; min-width: 0; margin-top: 1px; border: solid #b4b4b4; border-width: 1px 0 0 1px; background: #fff; overflow: hidden; }
.map svg { width: 100%; height: 100%; overflow: hidden; }

.status { display: flex; align-items: center; height: 29px; flex: none; padding-left: 4px; border-top: 1px solid #b4b4b4; white-space: nowrap; overflow: hidden; }
.status input, .combo { height: 22px; border: 1px solid #b0b0b0; border-radius: 3px; background: #fff; font: inherit; color: #000; }
.locator { display: flex; align-items: center; gap: 5px; width: 200px; height: 22px; margin-right: auto; padding-left: 8px; border: 1px solid #b0b0b0; border-radius: 3px; background: #fff; flex: none; }
.locator svg { width: 14px; height: 14px; }
.status .locator input { flex: 1; min-width: 0; height: 18px; padding: 0; border: 0; }
.locator input::placeholder { color: #777; }
#coord { width: 96px; margin-left: 3px; padding: 0 2px 0 5px; flex: none; }
.status button { margin: 0 12px 0 4px; }
.status button svg { width: 16px; height: 16px; }
.combo { position: relative; width: 82px; margin-left: 4px; flex: none; }
.combo::after { content: ""; position: absolute; right: 6px; top: 8px; width: 8px; height: 4px; background: #666; clip-path: polygon(0 0, 8px 0, 4px 4px); }
.combo::before { content: ""; position: absolute; right: 19px; top: 0; width: 1px; height: 20px; background: #b0b0b0; }
.combo select { appearance: none; width: 100%; height: 20px; padding: 0 0 0 3px; border: 0; background: none; font: inherit; color: #000; }
.lock { width: 14px; height: 16px; margin: 0 7px 0 10px; }
.magn { width: 18px; overflow: hidden; flex: none; }
```
FILE: map.js
```js
// Thresholded elevation raster: black = land above 50 m.
(function () {
  var seed = 20240;
  function rnd() {
    seed = (seed + 0x6D2B79F5) | 0;
    var t = Math.imul(seed ^ (seed >>> 15), 1 | seed);
    t = (t + Math.imul(t ^ (t >>> 7), 61 | t)) ^ t;
    return ((t ^ (t >>> 14)) >>> 0) / 4294967296;
  }

  // Each vertex is x, y and an optional roughness for the segment that follows.
  function rough(pts) {
    var out = [];
    for (var i = 0; i < pts.length; i++) {
      var a = pts[i], b = pts[(i + 1) % pts.length], r = a[2] || 0;
      var dx = b[0] - a[0], dy = b[1] - a[1], len = Math.hypot(dx, dy) || 1;
      out.push([a[0], a[1]]);
      if (!r) continue;
      for (var t = 2; t < len - 1; t += 2) {
        var o = (rnd() - 0.5) * 2 * r;
        out.push([a[0] + dx * t / len - dy / len * o, a[1] + dy * t / len + dx / len * o]);
      }
    }
    return 'M' + out.map(function (p) { return Math.round(p[0]) + ' ' + Math.round(p[1]); }).join('L') + 'Z';
  }

  var land = [[374,699],[374,237,2],[384,232,3],[382,218,4],[386,201],[687,201,3],[688,214,3],[692,228,3],[694,240,3],[692,254,3],[694,268,2],[694,280,2],[695,290,1],[696,297,1],
    [703,302,1],[720,311,1],[731,317,1],[737,322],[750,322,1],[755,327,1],[758,332,1],[763,338,1],[766,344,1],[773,349,1],[781,355,1],[786,366,1],[797,368,1],[810,373,1],[817,379,1],[819,386,1],[823,387],[822,392],[817,394],[817,405],[819,415],[816,422,1],[808,429],[799,434],[799,437],[805,444],[807,450],[804,458],[801,463],[803,466],[810,472],[801,470],[802,476,1],[790,477,1],[778,478,2],[765,480,2],[755,484,1],[745,483],[735,483,1],[725,487,1],[718,494,2],[713,502,1],[708,503,1],[700,508,1],[688,511,1],[681,518,1],[670,522,1],[660,527,1],[650,531,2],[634,530,1],[632,536],[638,542],[630,539,1],[618,546,1],[612,550],[617,556],[608,551],[602,556],[606,559],[598,561,1],[574,561,1],[561,566,1],[548,575,1],[542,590,1],[534,604],[528,602],[526,607],[530,611],[536,620],[527,613,1],[508,612],[503,616],[509,627,1],[507,640,2],[503,645,2],[491,652,3],[473,662,2],[454,669,1],[448,663,1],[437,657],[435,667,1],[422,669],[422,677],[425,680],[418,692],[416,699]];
  var basin = [[537,212,3],[560,211,3],[580,215,3],[600,226,3],[627,238,3],[645,237,3],[648,255,3],[655,270,2],[657,290,2],[659,299,1],[664,309,1],[661,314,2],[660,322,2],[661,332,2],[658,345,2],[654,358,2],[645,372,2],[637,385,2],[635,395,2],[623,407,2],[607,418,2],[593,425,2],[573,433,1],[547,438,1],[523,437,1],[513,433,1],[500,422,1],[483,417,1],[470,402,1],[457,397,1],[452,378,1],[441,367,1],[432,358,1],[423,352,2],[424,338,2],[422,322,2],[425,315,2],[422,292,2],[432,288,2],[438,267,2],[448,262,2],[460,245,2],[472,232,2],[487,232,2],[493,223,2],[510,217,2],[527,212,3]];
  var wedge = [[655,270,2],[664,266,2],[671,278,2],[677,288,2],[680,298,2],[670,305,1],[662,310],[656,292,1]];
  var southA = [[518,699],[518,695],[530,691,1],[543,689],[553,683,1],[563,678],[570,678],[577,681],[594,670,1],[607,665],[605,661],[611,666],[618,667,1],[632,673,1],[648,685],[651,693],[657,699]];
  var southB = [[663,699],[668,695],[674,688],[698,687],[717,686],[718,689],[720,682,1],[732,670,1],[753,655],[752,647],[756,652],[758,656],[762,652,1],[772,643,1],[777,634],[784,632],[781,619],[786,626],[790,631],[797,629],[803,628],[805,618],[804,610],[806,608],[807,618],[809,632,1],[819,641],[832,644,1],[850,655],[867,656],[869,651],[866,646],[872,649,1],[881,635],[877,628],[882,633],[892,618,1],[898,606,1],[905,598],[905,699]];
  var island = [[823,438,1],[832,447,1],[836,455,1],[843,461,1],[838,467,2],[826,466,2],[816,462,1],[817,452,1]];

  // Speckle patches: x, y, width, height, count, colour (k = black, w = white).
  var patches = [[377,203,10,32,34,'k'],[384,202,8,12,16,'w'],[685,203,9,90,60,'w'],[691,203,6,88,36,'k'],[500,206,60,6,20,'w'],[640,216,20,34,75,'w'],[622,230,26,10,26,'k'],[648,244,12,22,50,'w'],[656,264,20,38,115,'k'],[678,264,16,14,14,'w'],[664,268,18,26,30,'w'],[606,226,32,10,36,'w'],[656,316,5,40,20,'k'],[640,364,12,16,14,'k'],[480,216,40,9,24,'k'],[426,266,12,20,14,'k'],[417,300,6,50,24,'w'],[594,412,20,12,16,'k'],[538,438,12,6,14,'w'],[804,464,30,15,95,'k'],[818,450,12,12,8,'w'],[472,653,28,8,9,'k'],[452,666,16,4,7,'k'],[811,460,6,9,8,'k'],[622,532,18,3,7,'k']];
  function specks(colour) {
    var d = '';
    patches.forEach(function (p) {
      for (var i = 0; i < p[4]; i++) {
        var x = p[0] + Math.floor(rnd() * p[2]), y = p[1] + Math.floor(rnd() * p[3]);
        var w = 1 + Math.floor(rnd() * 2), h = 1 + Math.floor(rnd() * 2);
        if (p[5] === colour) d += 'M' + x + ' ' + y + 'h' + w + 'v' + h + 'h-' + w + 'z';
      }
    });
    return d;
  }
  function add(d, fill) {
    var el = document.createElementNS('http://www.w3.org/2000/svg', 'path');
    el.setAttribute('d', d);
    el.setAttribute('fill', fill);
    document.getElementById('map').appendChild(el);
  }
  add('M374 201h1v498h-1z' + rough(land), '#000');
  add(rough(basin), '#fff');
  add(rough(wedge) + 'M374 201h5v34h-5z', '#fff');
  add(rough(southA) + rough(southB) + rough(island), '#000');
  add(specks('w'), '#fff');
  add(specks('k') + 'M620 381h1v1h-1zM904 598h1v3h-1z', '#000');
})();
```
